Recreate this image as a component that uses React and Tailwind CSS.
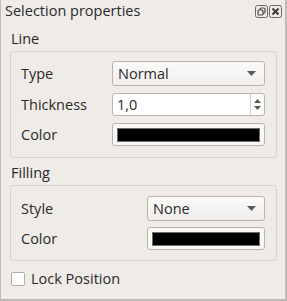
import React from "react";

const font = { fontFamily: '"Open Sans", "Noto Sans", sans-serif' };

function Arrow() {
  return (
    <svg width="9" height="5" viewBox="0 0 9 5" className="shrink-0">
      <path d="M0 0 L9 0 L4.5 5 Z" fill="#5a5855" />
    </svg>
  );
}

function Combo({ value, width }) {
  return (
    <div className={`flex h-[25px] items-center justify-between rounded-[3px] border border-[#b8b4ae] bg-gradient-to-b from-[#fbfaf9] to-[#f1efed] pl-[5px] pr-[8px] ${width}`}>
      <span className="text-[#2a2a2a]">{value}</span>
      <Arrow />
    </div>
  );
}

function ColorButton({ width }) {
  return (
    <div className={`flex h-[23px] items-center rounded-[3px] border border-[#b8b4ae] bg-[#f9f8f7] px-[4px] ${width}`}>
      <div className="h-[14px] w-full border border-[#6e6e6e] bg-black" />
    </div>
  );
}

function SpinBox({ value }) {
  return (
    <div className="flex h-[23px] w-[153px] items-stretch rounded-[3px] border border-[#b8b4ae] bg-white">
      <span className="flex flex-1 items-center pl-[4px] text-[#2a2a2a]">{value}</span>
      <div className="flex w-[14px] flex-col items-center justify-center gap-[3px] border-l border-[#d6d3cf]">
        <svg width="7" height="4" viewBox="0 0 7 4"><path d="M0 4 L7 4 L3.5 0 Z" fill="#5a5855" /></svg>
        <svg width="7" height="4" viewBox="0 0 7 4"><path d="M0 0 L7 0 L3.5 4 Z" fill="#5a5855" /></svg>
      </div>
    </div>
  );
}

function Row({ label, children, className }) {
  return (
    <div className={`flex items-center justify-between ${className || ""}`}>
      <span className="text-[#2a2a2a]">{label}</span>
      {children}
    </div>
  );
}

export default function App() {
  return (
    <div
      style={font}
      className="h-[301px] w-[287px] overflow-hidden border-b-2 border-l border-r-2 border-[#bdb9b3] bg-[#efebe7] text-[14.5px] leading-[18px] text-[#2a2a2a]"
    >
      <div className="flex h-[22px] items-center justify-between pl-[4px] pr-[3px]">
        <span>Selection properties</span>
        <div className="flex gap-[1px]">
          <svg width="13" height="13" viewBox="0 0 13 13">
            <rect x="0.5" y="0.5" width="12" height="12" rx="2" fill="none" stroke="#6a6865" />
            <rect x="5" y="3" width="5" height="5" rx="1" fill="none" stroke="#4a4846" strokeWidth="1.2" />
            <rect x="3" y="5" width="5" height="5" rx="1" fill="#efebe7" stroke="#4a4846" strokeWidth="1.2" />
          </svg>
          <svg width="13" height="13" viewBox="0 0 13 13">
            <rect x="0.5" y="0.5" width="12" height="12" rx="2" fill="none" stroke="#6a6865" />
            <path d="M3.5 3.5 L9.5 9.5 M9.5 3.5 L3.5 9.5" stroke="#3e3c3a" strokeWidth="2" />
          </svg>
        </div>
      </div>

      <div className="pl-[9px] pr-[8px]">
        <div className="mt-[8px] pl-[1px]">Line</div>
        <div className="mt-[3px] flex h-[107px] flex-col rounded-[3px] border border-[#d7d3ce] pl-[10px] pr-[11px] pt-[9px]">
          <Row label="Type">
            <Combo value="Normal" width="w-[153px]" />
          </Row>
          <Row label="Thickness" className="mt-[7px]">
            <SpinBox value="1,0" />
          </Row>
          <Row label="Color" className="mt-[7px]">
            <ColorButton width="w-[153px]" />
          </Row>
        </div>

        <div className="mt-[6px] pl-[1px]">Filling</div>
        <div className="mt-[3px] flex h-[76px] flex-col rounded-[3px] border border-[#d7d3ce] pl-[10px] pr-[11px] pt-[10px]">
          <Row label="Style">
            <Combo value="None" width="w-[118px]" />
          </Row>
          <Row label="Color" className="mt-[6px]">
            <ColorButton width="w-[118px]" />
          </Row>
        </div>

        <label className="mt-[9px] flex items-center gap-[6px] pl-[1px]">
          <span className="h-[14px] w-[14px] rounded-[2px] border border-[#b0aca6] bg-white" />
          <span>Lock Position</span>
        </label>
      </div>
    </div>
  );
}
